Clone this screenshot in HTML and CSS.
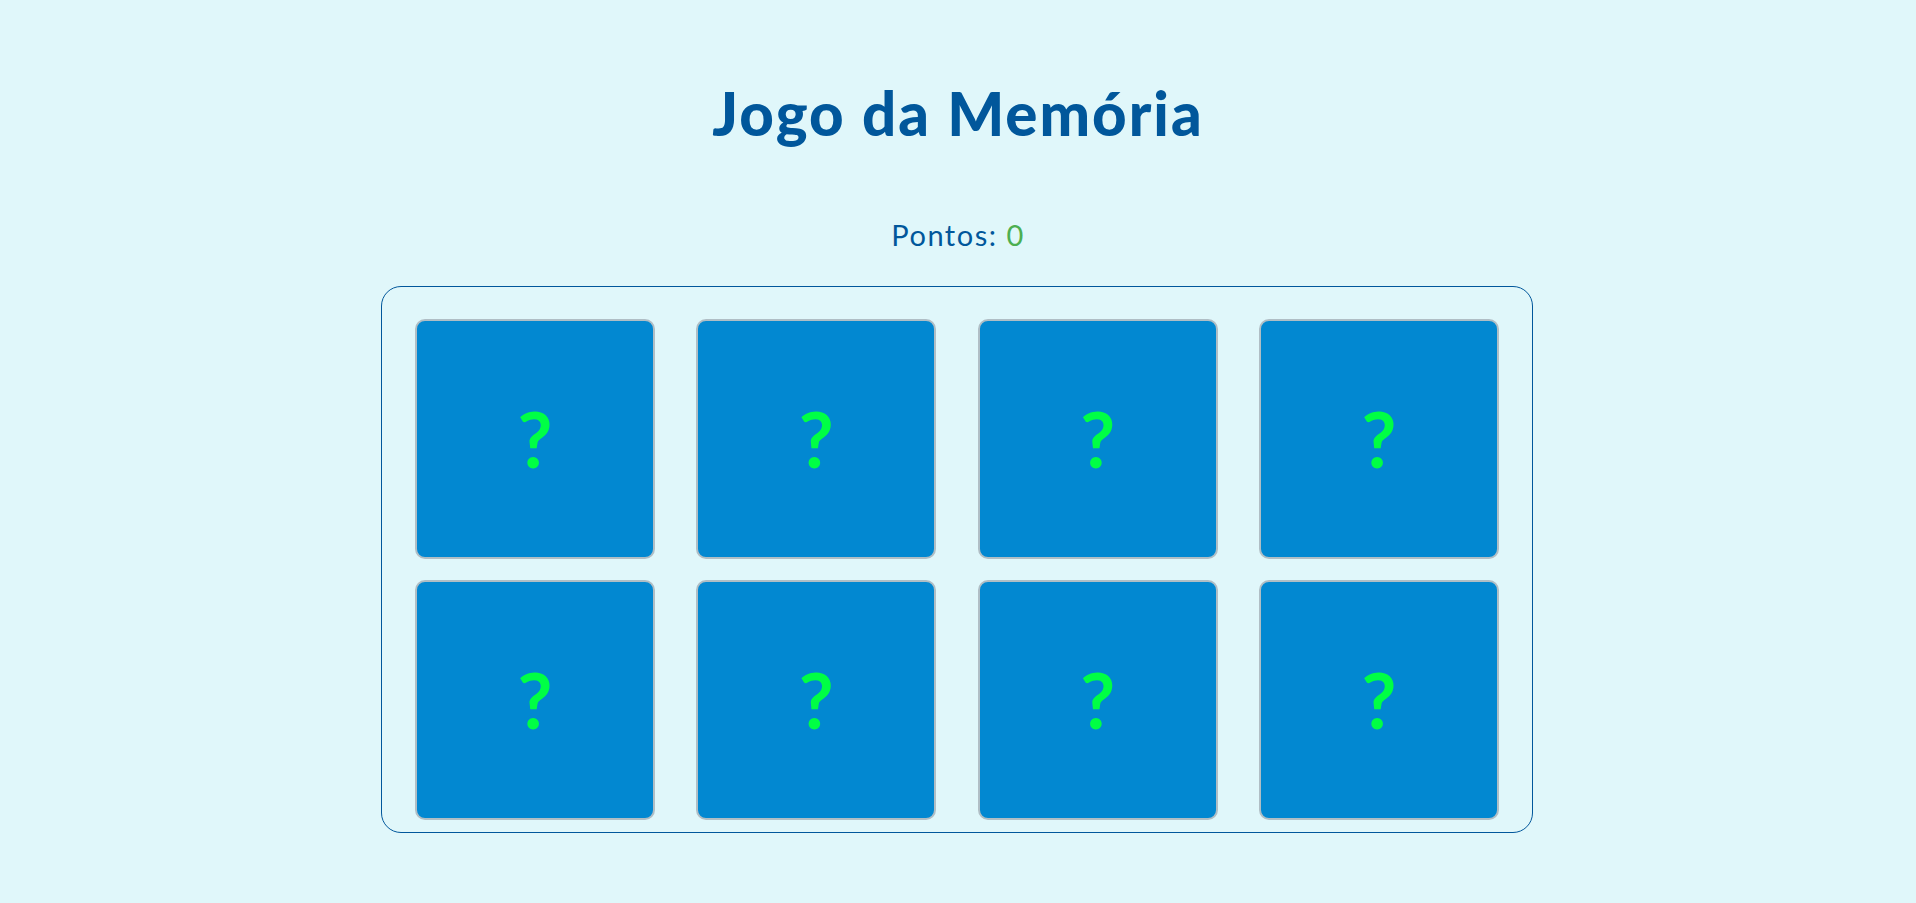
FILE: index.html
```html
<html>
    <head>
        <meta charset="utf-8">
        <title>Jogo da Memória</title>
        <link rel="stylesheet" href="styles.css">
    </head>
    <body>
        <div class="game">
            <h1 class="title">Jogo da Memória</h1>
            <div class="score">Pontos: <span id="points">0</span></div>
            <div class="board" id="board">
                <div class="card"><span>?</span></div>
                <div class="card"><span>?</span></div>
                <div class="card"><span>?</span></div>
                <div class="card"><span>?</span></div>
                <div class="card"><span>?</span></div>
                <div class="card"><span>?</span></div>
                <div class="card"><span>?</span></div>
                <div class="card"><span>?</span></div>
            </div>
        </div>
    </body>
</html>
```

FILE: styles.css
```css
html, body {
    padding: 0;
    margin: 0;
    height: 100%;
}
body {
    background-color: #e0f7fa;
    font-family: Lato, "Noto Sans", sans-serif;
}
.game {
    display: flex;
    flex-direction: column;
    align-items: center;
    padding-top: 77px;
}
.title {
    margin: 0;
    font-size: 60px;
    line-height: 72px;
    font-weight: 900;
    color: #01579b;
    letter-spacing: 2px;
}
.score {
    margin-top: 68px;
    font-size: 29px;
    line-height: 35px;
    color: #01579b;
    letter-spacing: 1.5px;
}
.score span {
    color: #4caf50;
}
.board {
    margin-top: 34px;
    margin-right: 2px;
    width: 1152px;
    box-sizing: border-box;
    border: 1px solid #01579b;
    border-radius: 20px;
    padding: 32px 33px 12px 33px;
    display: grid;
    grid-template-columns: repeat(4, 240px);
    justify-content: space-between;
    row-gap: 21px;
}
.card {
    width: 240px;
    height: 240px;
    box-sizing: border-box;
    background-color: #0288d1;
    border: 2px solid #b0bec5;
    border-radius: 10px;
    display: flex;
    align-items: center;
    justify-content: center;
    cursor: pointer;
}
.card span {
    font-size: 76px;
    font-weight: 700;
    color: #00ff44;
    line-height: 1;
}
```
